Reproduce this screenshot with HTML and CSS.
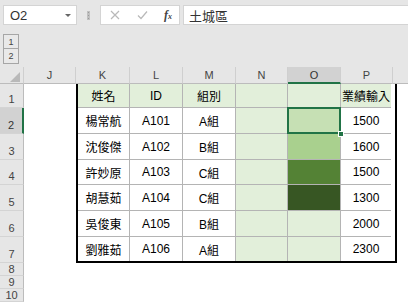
FILE: index.html
```html
<!DOCTYPE html>
<html>
<head>
<meta charset="utf-8">
<link rel="stylesheet" href="styles.css">
</head>
<body>
<div class="app">
  <div class="fbar">
    <div class="namebox"><span class="ref">O2</span><span class="caret"></span></div>
    <div class="dots"><i></i><i></i><i></i></div>
    <div class="fxbox">
      <svg class="ico" width="10" height="10" viewBox="0 0 10 10"><path d="M1 1L9 9M9 1L1 9" stroke="#b9b9b9" stroke-width="1.2" fill="none"/></svg>
      <svg class="ico" width="11" height="10" viewBox="0 0 11 10"><path d="M1 5.5L4 8.5L10 1.5" stroke="#b9b9b9" stroke-width="1.2" fill="none"/></svg>
      <span class="fx">f<span class="sub">x</span></span>
    </div>
    <div class="formula">土城區</div>
  </div>
  <div class="outline">
    <div class="lvl">1</div>
    <div class="lvl">2</div>
  </div>
  <div class="sheet">
    <div class="colheads">
      <div class="corner"><span class="tri"></span></div>
      <div class="ch">J</div>
      <div class="ch">K</div>
      <div class="ch">L</div>
      <div class="ch">M</div>
      <div class="ch">N</div>
      <div class="ch sel">O</div>
      <div class="ch">P</div>
      <div class="ch rest"></div>
    </div>
    <div class="body">
      <div class="rowheads">
        <div class="rh r1">1</div>
        <div class="rh r26 sel">2</div>
        <div class="rh r26">3</div>
        <div class="rh r25">4</div>
        <div class="rh r26">5</div>
        <div class="rh r26">6</div>
        <div class="rh r26">7</div>
        <div class="rh small">8</div>
        <div class="rh small">9</div>
        <div class="rh small">10</div>
      </div>
      <div class="canvas">
        <div class="table">
          <div class="c hd">姓名</div><div class="c hd">ID</div><div class="c hd">組別</div><div class="c hd"></div><div class="c hd"></div><div class="c hd last">業績輸入</div>
          <div class="c">楊常航</div><div class="c">A101</div><div class="c">A組</div><div class="c lg"></div><div class="c g1 active"><span class="handle"></span></div><div class="c last">1500</div>
          <div class="c">沈俊傑</div><div class="c">A102</div><div class="c">B組</div><div class="c lg"></div><div class="c g2"></div><div class="c last">1600</div>
          <div class="c">許妙原</div><div class="c">A103</div><div class="c">C組</div><div class="c lg"></div><div class="c g3"></div><div class="c last">1500</div>
          <div class="c">胡慧茹</div><div class="c">A104</div><div class="c">C組</div><div class="c lg"></div><div class="c g4"></div><div class="c last">1300</div>
          <div class="c">吳俊東</div><div class="c">A105</div><div class="c">B組</div><div class="c lg"></div><div class="c lg"></div><div class="c last">2000</div>
          <div class="c bot">劉雅茹</div><div class="c bot">A106</div><div class="c bot">A組</div><div class="c bot lg"></div><div class="c bot lg"></div><div class="c bot last">2300</div>
        </div>
      </div>
    </div>
  </div>
</div>
</body>
</html>
```

FILE: styles.css
```css
* { box-sizing: border-box; }
html, body { margin: 0; padding: 0; }
body {
  width: 408px;
  height: 302px;
  overflow: hidden;
  background: #e6e6e6;
  font-family: "Liberation Sans", "Noto Sans CJK TC", sans-serif;
}
.app { display: flex; flex-direction: column; }

/* formula bar */
.fbar {
  display: flex;
  align-items: stretch;
  height: 28px;
  padding: 5px 0 3px 3px;
}
.namebox {
  width: 74px;
  background: #fff;
  border: 1px solid #d4d4d4;
  display: flex;
  align-items: center;
  justify-content: space-between;
  padding: 0 4px 0 6px;
}
.ref { font-size: 13px; color: #333; }
.caret {
  width: 0; height: 0;
  border-left: 3px solid transparent;
  border-right: 3px solid transparent;
  border-top: 3px solid #666;
  margin-right: 1px;
}
.dots {
  width: 23px;
  display: flex;
  flex-direction: column;
  align-items: center;
  justify-content: center;
  gap: 2px;
}
.dots i { display: block; width: 1px; height: 1px; background: #9a9a9a; outline: 0.5px solid #c0c0c0; }
.fxbox {
  width: 80px;
  background: #fff;
  border: 1px solid #d4d4d4;
  display: flex;
  align-items: center;
  justify-content: space-between;
  padding: 0 7px 0 9px;
}
.fx {
  font-family: "Liberation Serif", serif;
  font-style: italic;
  font-size: 12px;
  color: #444;
  font-weight: bold;
}
.fx .sub { font-size: 8px; }
.formula {
  flex: 1;
  margin-left: 3px;
  background: #fff;
  border: 1px solid #d4d4d4;
  border-right: none;
  font-size: 13px;
  color: #333;
  display: flex;
  align-items: center;
  padding-left: 5px;
}

/* outline buttons */
.outline {
  height: 39px;
  padding: 6px 0 0 3px;
  display: flex;
  flex-direction: column;
}
.lvl {
  width: 16px;
  height: 15px;
  border: 1px solid #a6a6a6;
  font-size: 9px;
  color: #444;
  display: flex;
  align-items: center;
  justify-content: center;
  background: #e9e9e9;
}
.lvl + .lvl { border-top: none; }

/* sheet */
.sheet { display: flex; flex-direction: column; }
.colheads {
  display: grid;
  grid-template-columns: 24px 52px 54px 53px 53px 52px 53px 52px 1fr;
  height: 17px;
}
.ch, .corner {
  background: #e6e6e6;
  border-right: 1px solid #cfcfcf;
  border-bottom: 1px solid #bcbcbc;
  font-size: 11px;
  color: #444;
  display: flex;
  align-items: center;
  justify-content: center;
}
.tri {
  width: 0; height: 0;
  border-left: 10px solid transparent;
  border-bottom: 10px solid #b9b9b9;
  margin: 3px 2px 0 8px;
}
.ch.sel {
  background: #d2d2d2;
  border-bottom: 2px solid #217346;
  color: #333;
}
.ch.rest { border-right: none; }

.body { display: flex; }
.rowheads { width: 24px; display: flex; flex-direction: column; }
.rh {
  background: #e6e6e6;
  border-right: 1px solid #bcbcbc;
  border-bottom: 1px solid #d4d4d4;
  font-size: 11px;
  color: #444;
  display: flex;
  align-items: flex-end;
  justify-content: center;
  padding-bottom: 2px;
}
.rh.r1 { height: 24px; }
.rh.r26 { height: 26px; }
.rh.r25 { height: 25px; }
.rh.small { height: 13px; padding-bottom: 0; align-items: center; }
.rh.sel {
  background: #d2d2d2;
  border-right: 2px solid #217346;
  color: #333;
}

.canvas {
  flex: 1;
  background: #fff;
  padding-left: 52px;
}
.table {
  display: grid;
  width: 317px;
  grid-template-columns: 52px 53px 53px 52px 53px 50px;
  grid-template-rows: 24px 26px 26px 25px 26px 26px 24px;
  border-left: 2px solid #000;
  border-right: 2px solid #000;
  border-bottom: 2px solid #000;
  box-sizing: content-box;
}
.c {
  border-right: 1px solid #b4b4b4;
  border-bottom: 1px solid #b4b4b4;
  font-size: 12px;
  color: #000;
  display: flex;
  align-items: center;
  justify-content: center;
  white-space: nowrap;
}
.c.last { border-right: none; }
.c.bot { border-bottom: none; }
.c.hd { background: #e2efda; }
.c.lg { background: #e2efda; }
.c.g1 { background: #c6e0b4; }
.c.g2 { background: #a9d08e; }
.c.g3 { background: #548235; }
.c.g4 { background: #375623; }
.active { position: relative; }
.active::after {
  content: "";
  position: absolute;
  left: -1px; top: -1px; right: -1px; bottom: -1px;
  border: 2px solid #217346;
}
.handle {
  position: absolute;
  right: -4px;
  bottom: -4px;
  width: 6px;
  height: 6px;
  background: #217346;
  border: 1px solid #fff;
  z-index: 2;
}
```
